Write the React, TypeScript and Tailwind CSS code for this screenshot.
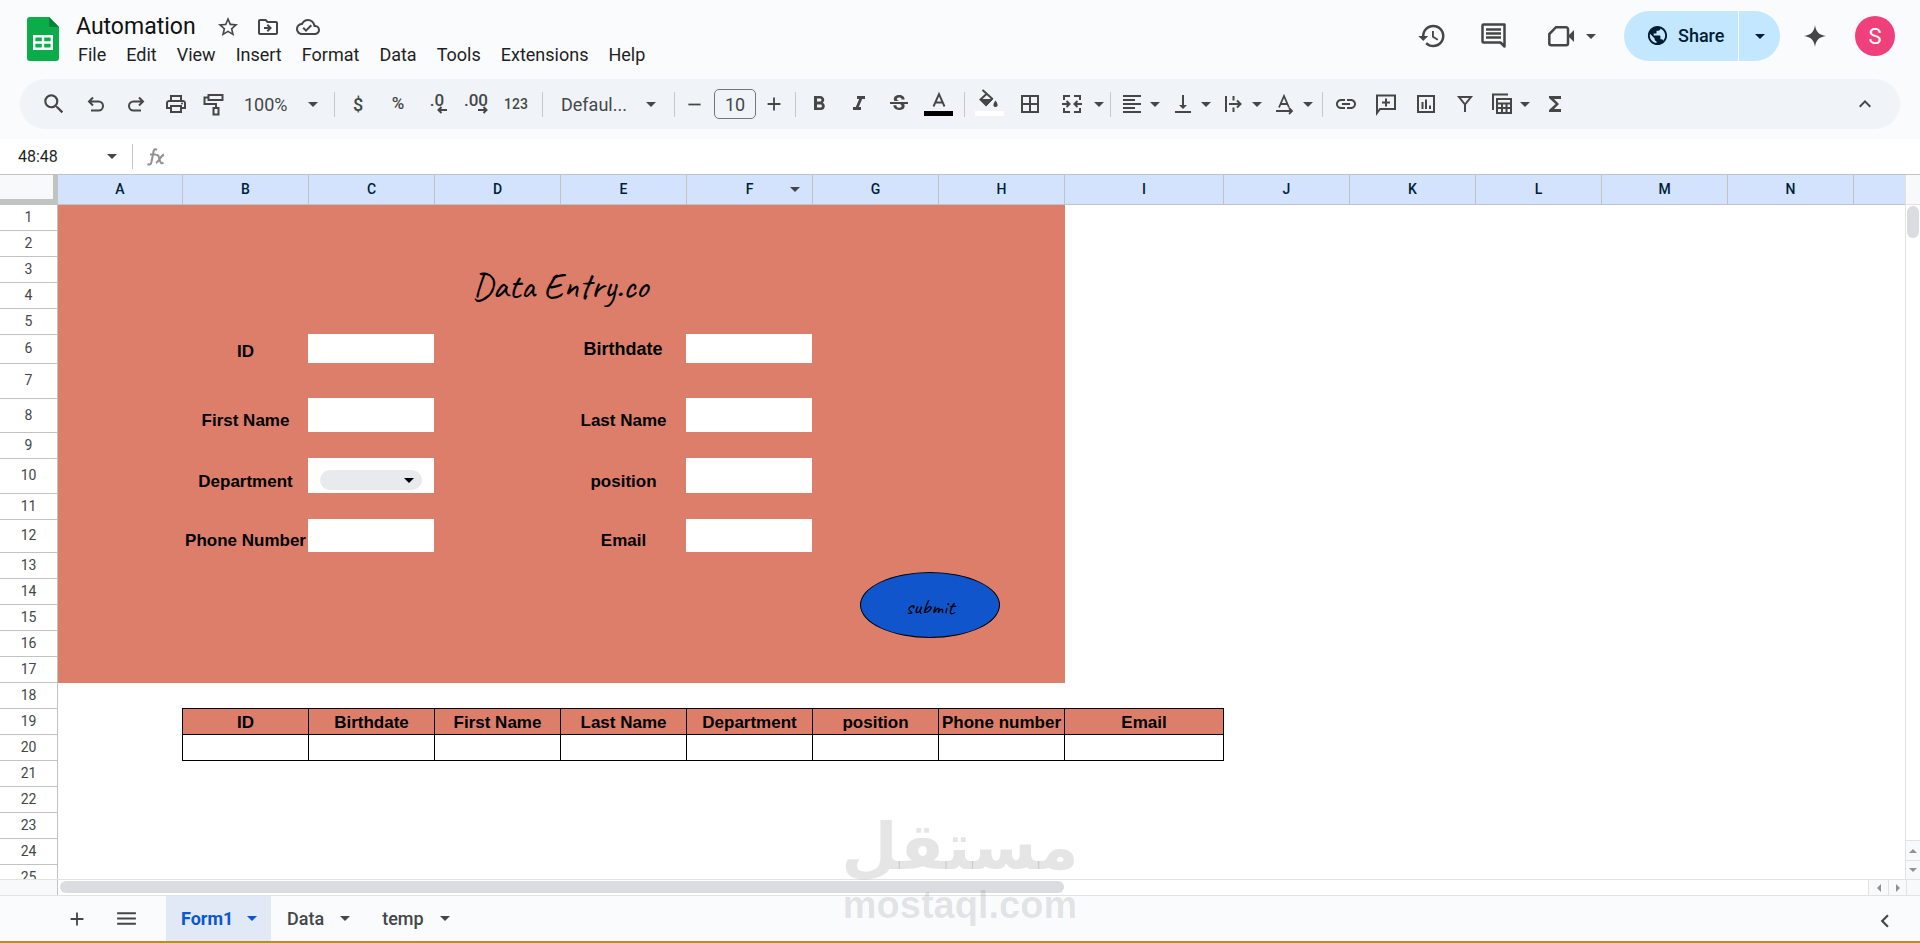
import type { ReactNode } from "react";
import {
  MdAdd,
  MdBorderAll,
  MdFormatAlignLeft,
  MdFormatBold,
  MdFormatItalic,
  MdFunctions,
  MdHistory,
  MdKeyboardArrowLeft,
  MdKeyboardArrowUp,
  MdLink,
  MdMenu,
  MdOutlineCloudDone,
  MdOutlineDriveFileMove,
  MdOutlinePrint,
  MdPublic,
  MdRemove,
  MdSearch,
  MdStarBorder,
  MdStrikethroughS,
  MdVerticalAlignBottom,
} from "react-icons/md";

const menus = ["File", "Edit", "View", "Insert", "Format", "Data", "Tools", "Extensions", "Help"];

const columns = [
  { name: "A", width: "w-[125px]" },
  { name: "B", width: "w-[126px]" },
  { name: "C", width: "w-[126px]" },
  { name: "D", width: "w-[126px]" },
  { name: "E", width: "w-[126px]" },
  { name: "F", width: "w-[126px]" },
  { name: "G", width: "w-[126px]" },
  { name: "H", width: "w-[126px]" },
  { name: "I", width: "w-[159px]" },
  { name: "J", width: "w-[126px]" },
  { name: "K", width: "w-[126px]" },
  { name: "L", width: "w-[126px]" },
  { name: "M", width: "w-[126px]" },
  { name: "N", width: "w-[126px]" },
  { name: "", width: "w-[126px]" },
];

// rows that are taller than the default
const rowHeights: Record<number, string> = {
  6: "h-[29px]",
  7: "h-[35px]",
  8: "h-[34px]",
  10: "h-[35px]",
  12: "h-[33px]",
};

const rows = Array.from({ length: 25 }, (_, i) => i + 1);

const tableHead = ["ID", "Birthdate", "First Name", "Last Name", "Department", "position", "Phone number", "Email"];

const fields = [
  { id: "id", label: "ID", labelPos: "col-start-2 row-start-6", inputPos: "col-start-3 row-start-6" },
  { id: "first", label: "First Name", labelPos: "col-start-2 row-start-8", inputPos: "col-start-3 row-start-8" },
  { id: "phone", label: "Phone Number", labelPos: "col-start-2 row-start-12", inputPos: "col-start-3 row-start-12" },
  { id: "last", label: "Last Name", labelPos: "col-start-5 row-start-8", inputPos: "col-start-6 row-start-8" },
  { id: "position", label: "position", labelPos: "col-start-5 row-start-10", inputPos: "col-start-6 row-start-10" },
  { id: "email", label: "Email", labelPos: "col-start-5 row-start-12", inputPos: "col-start-6 row-start-12" },
];

const labelClass = "flex items-end justify-center pb-px pl-px whitespace-nowrap text-[17px] leading-5 font-bold";

function Caret({ className = "" }: { className?: string }) {
  return (
    <svg viewBox="0 0 10 5" className={`h-[5px] w-[10px] shrink-0 ${className}`} fill="currentColor" aria-hidden="true">
      <path d="M0 0h10L5 5z" />
    </svg>
  );
}

function Icon({ children }: { children: ReactNode }) {
  return (
    <svg viewBox="0 0 24 24" className="size-6 shrink-0" fill="none" stroke="currentColor" strokeWidth="2" aria-hidden="true">
      {children}
    </svg>
  );
}

function Tool({ label, children, className = "w-10" }: { label: string; children: ReactNode; className?: string }) {
  return (
    <button aria-label={label} className={`flex h-9 shrink-0 items-center justify-center ${className}`}>
      {children}
    </button>
  );
}

function DropTool({ label, children, className = "w-9" }: { label: string; children: ReactNode; className?: string }) {
  return (
    <button aria-label={label} className="mr-[5px] flex h-9 shrink-0 items-center">
      <span className={`flex justify-center ${className}`}>{children}</span>
      <Caret />
    </button>
  );
}

function Divider({ className = "" }: { className?: string }) {
  return <div className={`h-[25px] w-px shrink-0 bg-[#c7c7c7] ${className}`} />;
}

function Header() {
  return (
    <header className="flex h-[79px] shrink-0 items-start">
      <svg viewBox="0 0 32 44" className="mt-[17px] ml-[27px] h-11 w-8 shrink-0" aria-hidden="true">
        <path d="M3 0h19l10 10v31a3 3 0 0 1-3 3H3a3 3 0 0 1-3-3V3a3 3 0 0 1 3-3z" fill="#0bac4a" />
        <path d="M22 0l10 10h-8a2 2 0 0 1-2-2z" fill="#078238" />
        <path d="M7.2 19.2h17.6v12.6H7.2zM16 19v13M7 25.500h18" fill="none" stroke="#fff" strokeWidth="2.400" />
      </svg>

      <div className="ml-[17px] pt-3">
        <div className="flex h-[30px] items-center text-[#444746]">
          <h1 className="text-[23px] leading-[30px] text-[#111]">Automation</h1>
          <div className="ml-5 flex gap-4">
            <button aria-label="Star"><MdStarBorder size={24} /></button>
            <button aria-label="Move"><MdOutlineDriveFileMove size={24} /></button>
            <button aria-label="Document status"><MdOutlineCloudDone size={24} /></button>
          </div>
        </div>
        <nav className="flex gap-5 pl-[2px] text-[18px] leading-[26px] text-[#1f1f1f]">
          {menus.map((m) => (
            <button key={m}>{m}</button>
          ))}
        </nav>
      </div>

      <div className="mt-[11px] mr-[25px] ml-auto flex h-[50px] items-center text-[#444746]">
        <button aria-label="Version history"><MdHistory size={30} /></button>
        <button aria-label="Comments" className="ml-8">
          <svg viewBox="0 0 30 30" className="size-[30px]" aria-hidden="true">
            <path d="M4.500 3.500h21v22l-4-4h-17a1 1 0 0 1-1-1v-16a1 1 0 0 1 1-1z" fill="none" stroke="currentColor" strokeWidth="2.500" strokeLinejoin="round" />
            <path d="M7 8.500h15M7 12.500h15M7 16.500h15" stroke="currentColor" strokeWidth="2.500" />
          </svg>
        </button>
        <button aria-label="Join a call" className="ml-[39px] flex items-center">
          <svg viewBox="0 0 26 22" className="h-[22px] w-[26px]" aria-hidden="true">
            <path d="M8 2.200h10a2 2 0 0 1 2 2v14a2 2 0 0 1-2 2H3.300a2 2 0 0 1-2-2V9z" fill="none" stroke="currentColor" strokeWidth="2.500" />
            <path d="M20 11l6-6v12z" fill="currentColor" />
          </svg>
          <Caret className="ml-3" />
        </button>
        <div className="ml-7 flex h-[50px] text-[#001d35]">
          <button className="flex w-[114px] items-center rounded-l-full bg-[#c2e7ff] pb-[2px] pl-[22px] text-[18px] font-medium">
            <MdPublic size={23} />
            <span className="ml-[9px]">Share</span>
          </button>
          <button aria-label="Sharing options" className="ml-px flex w-[41px] items-center justify-center rounded-r-full bg-[#c2e7ff]">
            <Caret />
          </button>
        </div>
        <button aria-label="Assistant" className="ml-6">
          <svg viewBox="0 0 24 24" className="size-[22px]" fill="currentColor" aria-hidden="true">
            <path d="M12 0C13 7.500 16.500 11 24 12C16.500 13 13 16.500 12 24C11 16.500 7.500 13 0 12C7.500 11 11 7.500 12 0z" />
          </svg>
        </button>
        <button className="ml-[29px] flex size-10 items-center justify-center rounded-full bg-[#ef407b] text-[22px] text-white">
          S
        </button>
      </div>
    </header>
  );
}

function Toolbar() {
  return (
    <div className="mx-5 mb-[10px] flex h-[50px] shrink-0 items-center rounded-full bg-[#f0f4f9] pl-3 text-[#444746]">
      <Tool label="Search the menus" className="w-11"><MdSearch size={26} /></Tool>
      <Tool label="Undo">
        <Icon><path d="M5 9.500h9.500a4.500 4.500 0 0 1 0 9H7M9 5.500l-4 4 4 4" /></Icon>
      </Tool>
      <Tool label="Redo">
        <Icon><path d="M19 9.500H9.500a4.500 4.500 0 0 0 0 9H17M15 5.500l4 4-4 4" /></Icon>
      </Tool>
      <Tool label="Print"><MdOutlinePrint size={24} /></Tool>
      <Tool label="Paint format" className="w-9">
        <Icon><path d="M6.500 3h14v5h-14zM6.500 5.500h-4V12H14v4M11.500 16h5v6.500h-5z" /></Icon>
      </Tool>
      <button className="flex h-9 w-24 shrink-0 items-center justify-between pr-[10px] pl-3 text-[18px]">
        100% <Caret />
      </button>
      <Divider className="mr-[3px] ml-[6px]" />
      <Tool label="Currency"><span className="text-[18px] font-medium">$</span></Tool>
      <Tool label="Percent"><span className="text-[17px] font-medium">%</span></Tool>
      <Tool label="Decrease decimals" className="w-[38px]">
        <span className="relative -mt-2 w-5 text-[17px] leading-5 font-medium">
          .0
          <svg viewBox="0 0 10 8" className="absolute top-[16px] right-0 h-2 w-[10px]" fill="none" stroke="currentColor" strokeWidth="2">
            <path d="M10 4H1.500M4.500 1l-3 3 3 3" />
          </svg>
        </span>
      </Tool>
      <Tool label="Increase decimals">
        <span className="relative -mt-2 text-[17px] leading-5 font-medium">
          .00
          <svg viewBox="0 0 10 8" className="absolute top-[16px] right-0 h-2 w-[10px]" fill="none" stroke="currentColor" strokeWidth="2">
            <path d="M0 4h8.500M5.500 1l3 3-3 3" />
          </svg>
        </span>
      </Tool>
      <Tool label="More formats"><span className="text-sm font-medium">123</span></Tool>
      <Divider className="ml-[6px]" />
      <button className="flex h-9 w-[125px] shrink-0 items-center justify-between pr-3 pl-[18px] text-[18px]">
        Defaul... <Caret />
      </button>
      <Divider className="ml-[6px]" />
      <Tool label="Decrease font size" className="w-[38px]"><MdRemove size={21} /></Tool>
      <input
        aria-label="Font size"
        defaultValue="10"
        className="ml-px h-[30px] w-[42px] shrink-0 rounded-[5px] border border-[#747775] text-center text-[18px]"
      />
      <Tool label="Increase font size" className="w-[35px]"><MdAdd size={22} /></Tool>
      <Divider className="mr-[3px] ml-1" />
      <Tool label="Bold"><MdFormatBold size={24} /></Tool>
      <Tool label="Italic"><MdFormatItalic size={24} /></Tool>
      <Tool label="Strikethrough"><MdStrikethroughS size={24} /></Tool>
      <Tool label="Text color">
        <svg viewBox="0 0 30 30" className="size-[30px]" aria-hidden="true">
          <path d="M9.500 17.500L15 5l5.500 12.500M11.500 13.500h7" fill="none" stroke="currentColor" strokeWidth="1.900" />
          <path d="M0 22h29v5H0z" fill="#000" />
        </svg>
      </Tool>
      <Divider className="mx-[5px]" />
      <Tool label="Fill color">
        <svg viewBox="0 0 30 30" className="size-[30px]" aria-hidden="true">
          <path d="M7.500 1l9.500 8.500L11 16 5.500 10.500 11.500 5" fill="none" stroke="currentColor" strokeWidth="2" />
          <path d="M5.500 10.500h12L11.500 16.500z" fill="currentColor" stroke="currentColor" />
          <path d="M20.500 11.500c3.500 4.500 2 6.500 0 6.500s-3.500-2 0-6.500z" fill="currentColor" />
          <path d="M0 22h29v5H0z" fill="#fff" />
        </svg>
      </Tool>
      <Tool label="Borders"><MdBorderAll size={24} /></Tool>
      <DropTool label="Merge cells" className="w-11">
        <Icon>
          <path d="M10 4H4v4M4 16v4h6M14 4h6v4M20 16v4h-6M2 12h7M22 12h-7M6.500 9l3 3-3 3M17.500 9l-3 3 3 3" />
        </Icon>
      </DropTool>
      <Divider className="mr-[3px] ml-px" />
      <DropTool label="Horizontal align"><MdFormatAlignLeft size={24} /></DropTool>
      <DropTool label="Vertical align"><MdVerticalAlignBottom size={24} /></DropTool>
      <DropTool label="Text wrapping">
        <Icon><path d="M4 4v16M11.500 4v4.500M11.500 15.500V20M7 12h11M15 8.500l3.500 3.500-3.500 3.500" /></Icon>
      </DropTool>
      <DropTool label="Text rotation">
        <Icon><path d="M6 15.500L11 4l5 11.500M7.500 12h7M3 19h15M16 16l3 3-3 3" strokeWidth="1.800" /></Icon>
      </DropTool>
      <Divider className="mr-[3px] ml-1" />
      <Tool label="Insert link"><MdLink size={24} /></Tool>
      <Tool label="Insert comment">
        <Icon><path d="M3 21V3.500h18V17H6zM12 6.500v8M8 10.500h8" /></Icon>
      </Tool>
      <Tool label="Insert chart">
        <Icon><path d="M4 4h16v16H4zM8.500 10v7M12 7.500V17M16 13.500V17" /></Icon>
      </Tool>
      <Tool label="Create a filter" className="w-[38px]">
        <Icon><path d="M6 5h12l-6 7.500zM12 12v8" /></Icon>
      </Tool>
      <DropTool label="Table views">
        <Icon><path d="M18 2.500H3V18M7 7h14v14H7zM7 11.500h14M7 16h14M12 11.500V21M16.500 11.500V21" /></Icon>
      </DropTool>
      <Tool label="Functions"><MdFunctions size={24} /></Tool>
      <Tool label="Hide the menus" className="mr-[15px] ml-auto w-10"><MdKeyboardArrowUp size={24} /></Tool>
    </div>
  );
}

function FormulaBar() {
  return (
    <div className="flex h-[35px] shrink-0 items-center bg-white text-[#444746]">
      <input aria-label="Name box" defaultValue="48:48" className="ml-[18px] w-[89px] text-[16px] text-[#1f1f1f]" />
      <Caret />
      <Divider className="ml-[15px]" />
      <svg viewBox="0 0 18 18" className="ml-[14px] size-[18px]" fill="none" stroke="#8f9193" strokeWidth="2" aria-hidden="true">
        <path d="M10 2C7 0 6.500 3 6 6L4.500 14c-.4 2.500-2 3-4 2M3 6.500h6M9 7.500c2-1.500 2.500 0 3.500 4s2 4.500 4 3M17 6.500c-3 1-5 7-8 8.500" />
      </svg>
    </div>
  );
}

function DataEntryForm() {
  return (
    <form className="grid w-fit grid-cols-[124px_repeat(7,126px)] grid-rows-[25px_repeat(4,26px)_29px_35px_34px_26px_35px_26px_33px_repeat(5,26px)] bg-[#dd7e6b] pr-px pb-px">
      <h2 className="col-span-2 col-start-4 row-span-2 row-start-3 flex items-center justify-center pt-2 font-['Caveat','Lato',cursive] text-[36px] leading-10">
        Data Entry.co
      </h2>

      {fields.map((f) => (
        <label key={f.id} htmlFor={f.id} className={`${labelClass} ${f.labelPos}`}>
          {f.label}
        </label>
      ))}
      {fields.map((f) => (
        <input key={f.id} id={f.id} className={`min-w-0 bg-white px-1 ${f.inputPos}`} />
      ))}

      <label htmlFor="birthdate" className="col-start-5 row-start-6 flex items-center justify-center pt-[2px] text-[18px] font-bold">
        Birthdate
      </label>
      <input id="birthdate" className="col-start-6 row-start-6 min-w-0 bg-white px-1" />

      <label htmlFor="department" className={`${labelClass} col-start-2 row-start-10`}>
        Department
      </label>
      <div className="relative col-start-3 row-start-10 bg-white px-3 pt-3">
        <select id="department" className="block h-5 w-full appearance-none rounded-full bg-[#e8eaed]">
          <option></option>
        </select>
        <Caret className="pointer-events-none absolute top-5 right-5" />
      </div>

      <button
        type="button"
        className="col-span-2 col-start-7 row-span-4 row-start-13 mt-5 ml-12 h-[66px] w-[140px] rounded-[50%] border border-black bg-[#1155cc] pt-1 font-['Caveat','Lato',cursive] text-[22px]"
      >
        submit
      </button>
    </form>
  );
}

function DataTable() {
  return (
    <table className="mt-[25px] ml-[124px] table-fixed border-collapse text-[17px] leading-5">
      <colgroup>
        {tableHead.map((h) => (
          <col key={h} className={h === "Email" ? "w-[159px]" : "w-[126px]"} />
        ))}
      </colgroup>
      <thead>
        <tr className="h-[26px] bg-[#dd7e6b]">
          {tableHead.map((h) => (
            <th key={h} className="border border-black p-0 pt-[2px] font-bold whitespace-nowrap">{h}</th>
          ))}
        </tr>
      </thead>
      <tbody>
        <tr className="h-[26px]">
          {tableHead.map((h) => (
            <td key={h} className="border border-black p-0"></td>
          ))}
        </tr>
      </tbody>
    </table>
  );
}

function Sheet() {
  return (
    <main className="flex min-h-0 flex-1 flex-col border-t border-[#c0c3c2] bg-white">
      <div className="flex h-[29px] shrink-0">
        <div className="w-[57px] shrink-0 border-r-4 border-b-5 border-[#c0c3c2] bg-[#f8f9fa]" />
        <div className="flex min-w-0 flex-1 overflow-hidden text-sm font-medium text-[#001d35]">
          {columns.map((c, i) => (
            <div key={i} className={`relative flex shrink-0 items-center justify-center border-l border-[#c0c3c2] bg-[#d3e3fd] pb-px ${c.width}`}>
              {c.name}
              {c.name === "F" && <Caret className="absolute right-3 text-[#444746]" />}
            </div>
          ))}
        </div>
        <div className="w-[15px] shrink-0 border-l border-[#e1e3e1] bg-[#f8f9fa]" />
      </div>

      <div className="flex min-h-0 flex-1">
        <div className="w-[57px] shrink-0 overflow-hidden text-center text-sm text-[#444746]">
          {rows.map((n) => (
            <div key={n} className={`flex items-center justify-center border-t border-[#c0c3c2] pb-[2px] ${rowHeights[n] ?? "h-[26px]"}`}>
              {n}
            </div>
          ))}
        </div>
        <div className="min-w-0 flex-1 overflow-hidden border-t border-l border-[#c0c3c2] font-['Arial','Liberation_Sans',sans-serif] text-black">
          <DataEntryForm />
          <DataTable />
        </div>
        <div className="flex w-[15px] shrink-0 flex-col border-t border-l border-[#e1e3e1] text-[#8f9193]">
          <div className="mx-px mt-px h-8 rounded-full bg-[#dadce0]" />
          <button aria-label="Scroll up" className="mt-auto flex h-5 items-center justify-center border-t border-[#e1e3e1] bg-[#f8f9fa]">
            <svg viewBox="0 0 8 4" className="h-1 w-2" fill="currentColor"><path d="M0 4h8L4 0z" /></svg>
          </button>
          <button aria-label="Scroll down" className="flex h-[19px] items-center justify-center border-t border-[#e1e3e1] bg-[#f8f9fa]">
            <svg viewBox="0 0 8 4" className="h-1 w-2" fill="currentColor"><path d="M0 0h8L4 4z" /></svg>
          </button>
        </div>
      </div>

      {/* horizontal scrollbar */}
      <div className="flex h-4 shrink-0 border-t border-[#e1e3e1] text-[#8f9193]">
        <div className="w-[58px] shrink-0 border-r border-[#c0c3c2] bg-[#f8f9fa]" />
        <div className="flex-1 py-px pl-[2px]">
          <div className="h-3 w-5/9 rounded-full bg-[#dadce0]" />
        </div>
        <button aria-label="Scroll left" className="flex w-5 items-center justify-center border-l border-[#e1e3e1] bg-[#f8f9fa]">
          <svg viewBox="0 0 4 8" className="h-2 w-1" fill="currentColor"><path d="M4 0v8L0 4z" /></svg>
        </button>
        <button aria-label="Scroll right" className="flex w-[18px] items-center justify-center border-l border-[#e1e3e1] bg-[#f8f9fa]">
          <svg viewBox="0 0 4 8" className="h-2 w-1" fill="currentColor"><path d="M0 0v8l4-4z" /></svg>
        </button>
        <div className="w-[14px] border-l border-[#e1e3e1] bg-[#f8f9fa]" />
      </div>
    </main>
  );
}

function SheetTabs() {
  return (
    <footer className="flex h-[46px] shrink-0 items-stretch border-t border-[#e1e3e1] text-[18px] text-[#444746]">
      <button aria-label="Add sheet" className="ml-16 px-[2px]"><MdAdd size={22} /></button>
      <button aria-label="All sheets" className="ml-6"><MdMenu size={25} /></button>
      <button className="ml-[27px] flex w-[105px] items-center justify-between bg-[#e1e9f7] pr-[14px] pl-[15px] font-bold text-[#0b57d0]">
        Form1 <Caret />
      </button>
      <button className="ml-4 flex items-center gap-4 font-medium">
        Data <Caret />
      </button>
      <button className="ml-8 flex items-center gap-4 font-medium">
        temp <Caret />
      </button>
      <button aria-label="Show side panel" className="mr-[22px] ml-auto pt-1"><MdKeyboardArrowLeft size={26} /></button>
    </footer>
  );
}

export default function App() {
  return (
    <div className="relative flex h-screen flex-col overflow-hidden bg-[#f9fbfd] font-['Google_Sans','Roboto',sans-serif]">
      <Header />
      <Toolbar />
      <FormulaBar />
      <Sheet />
      <SheetTabs />
      <div className="h-[2px] shrink-0 bg-[#b98a33]" />

      {/* watermark */}
      <div className="pointer-events-none absolute bottom-[18px] left-1/2 flex w-[232px] -translate-x-1/2 flex-col items-center font-bold text-black/10">
        <span lang="ar" dir="rtl" className="font-['DejaVu_Sans',sans-serif] text-[65px] leading-[76px]">مستقل</span>
        <span className="font-['Liberation_Sans',sans-serif] text-[38px] leading-10">mostaql.com</span>
      </div>
    </div>
  );
}
